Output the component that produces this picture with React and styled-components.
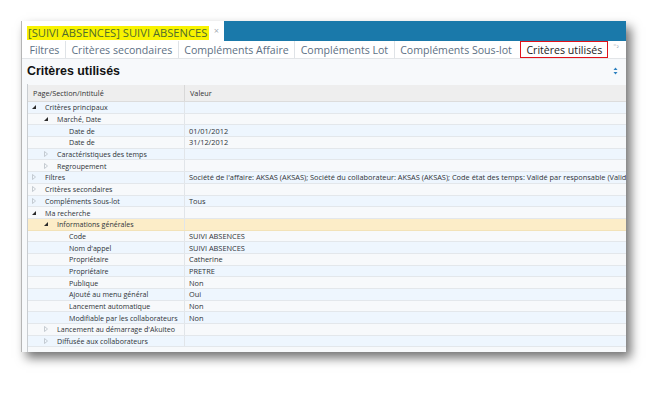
import React from "react";
import styled, { createGlobalStyle } from "styled-components";

const GlobalStyle = createGlobalStyle`
  html, body {
    margin: 0;
    background: #ffffff;
  }
`;

// Page holding the captured window
const Page = styled.div`
  padding: 21px 0 0 21px;
  width: 668px;
  height: 394px;
  box-sizing: border-box;
`;

const Window = styled.div`
  width: 605px;
  height: 331px;
  display: flex;
  flex-direction: column;
  background: #f7f9fb;
  border-left: 1px solid #b5b5b5;
  box-sizing: border-box;
  box-shadow: 5px 6px 10px rgba(0, 0, 0, 0.55);
  overflow: hidden;
`;

// Blue title bar with the document tab
const TitleBar = styled.div`
  height: 20px;
  background: #1a79aa;
  display: flex;
  flex-shrink: 0;
`;

const DocTab = styled.div`
  width: 202px;
  background: #ffffff;
  display: flex;
  align-items: flex-end;
  padding: 0 0 1px 5px;
  gap: 4px;
  box-sizing: border-box;
`;

const DocTitle = styled.span`
  background: #f8f300;
  color: #4f6c2c;
  font-family: "Open Sans", sans-serif;
  font-size: 11.2px;
  line-height: 14px;
  padding: 0 2px 0 1px;
  white-space: nowrap;
`;

const Close = styled.span`
  color: #9aa4ac;
  font-family: "DejaVu Sans", sans-serif;
  font-size: 7px;
  line-height: 14px;
  align-self: flex-start;
  margin-top: 3px;
`;

// Section tabs
const TabStrip = styled.div`
  height: 17px;
  background: #ffffff;
  display: flex;
  align-items: stretch;
  padding-left: 2px;
  border-bottom: 1px solid #e2e5e8;
  flex-shrink: 0;
`;

const Tab = styled.div`
  display: flex;
  align-items: center;
  padding: 0 ${(p) => (p.active ? "6px" : "5.5px")};
  font-family: "Open Sans", sans-serif;
  font-size: 10.6px;
  color: ${(p) => (p.active ? "#222222" : "#5d7084")};
  border-right: ${(p) => (p.last ? "none" : "1px solid #dfe3e7")};
  outline: ${(p) => (p.active ? "1.5px solid #e0131b" : "none")};
  outline-offset: -1.5px;
  margin-left: ${(p) => (p.active ? "3px" : "0")};
  white-space: nowrap;
`;

const Overflow = styled.span`
  margin-left: 5px;
  margin-top: 2px;
  font-family: "DejaVu Sans", sans-serif;
  font-size: 6px;
  color: #8a98a6;
  line-height: 6px;
`;

// Heading area
const Heading = styled.div`
  height: 25px;
  display: flex;
  align-items: center;
  justify-content: space-between;
  padding: 0 8px 2px 5px;
  box-sizing: border-box;
  flex-shrink: 0;
`;

const HeadingTitle = styled.h1`
  margin: 0;
  font-family: "Liberation Sans", Arial, sans-serif;
  font-weight: bold;
  font-size: 12.4px;
  color: #111111;
`;

// Grid
const Grid = styled.div`
  margin-left: 5px;
  border-left: 1px solid #c9cdd1;
  flex: 1;
  display: flex;
  flex-direction: column;
  font-family: "Open Sans", sans-serif;
  font-size: 7.1px;
  color: #2e3338;
`;

const HeaderRow = styled.div`
  height: 17px;
  background: #eeeeee;
  display: grid;
  grid-template-columns: 157px 1fr;
  border-bottom: 1px solid #dcdcdc;
  box-sizing: border-box;
  flex-shrink: 0;
  margin-top: 1px;
`;

const HeaderCell = styled.div`
  display: flex;
  align-items: center;
  padding-left: 5px;
  font-size: 7.3px;
  color: #333333;
  border-right: ${(p) => (p.first ? "1px solid #d8d8d8" : "none")};
`;

const Row = styled.div`
  height: 11.7px;
  display: grid;
  grid-template-columns: 157px 1fr;
  background: ${(p) =>
    p.selected ? "#fcedc8" : p.odd ? "#f7f9fb" : "#eef6fe"};
  border-bottom: 1px solid ${(p) => (p.selected ? "#f2e2b8" : "#e3e7eb")};
  box-sizing: border-box;
  flex-shrink: 0;
`;

const Cell = styled.div`
  display: flex;
  align-items: center;
  white-space: nowrap;
  overflow: hidden;
  padding-left: ${(p) => p.indent}px;
  font-size: ${(p) => (p.first ? "7.1px" : "7.4px")};
  border-right: ${(p) => (p.first ? "1px solid #e1e5e9" : "none")};
`;

const ArrowBox = styled.span`
  width: 12px;
  display: inline-flex;
  justify-content: center;
  align-items: center;
  margin-right: 5px;
`;

const Expander = ({ state }) => (
  <ArrowBox>
    {state === "open" && (
      <svg width="4" height="4" viewBox="0 0 4 4">
        <path d="M4 0 L4 4 L0 4 Z" fill="#2a2a2a" />
      </svg>
    )}
    {state === "closed" && (
      <svg width="4" height="6" viewBox="0 0 4 6">
        <path d="M0.5 0.5 L3.5 3 L0.5 5.5 Z" fill="none" stroke="#b9c0c6" strokeWidth="0.8" />
      </svg>
    )}
  </ArrowBox>
);

const SortIcon = () => (
  <svg width="5" height="8" viewBox="0 0 5 8">
    <path d="M2.5 0.5 L4.5 3 L0.5 3 Z" fill="#2b7fbf" />
    <path d="M2.5 7.5 L4.5 5 L0.5 5 Z" fill="#2b7fbf" />
  </svg>
);

const tabs = [
  "Filtres",
  "Critères secondaires",
  "Compléments Affaire",
  "Compléments Lot",
  "Compléments Sous-lot",
];

const rows = [
  { level: 0, state: "open", label: "Critères principaux" },
  { level: 1, state: "open", label: "Marché, Date" },
  { level: 2, label: "Date de", value: "01/01/2012" },
  { level: 2, label: "Date de", value: "31/12/2012" },
  { level: 1, state: "closed", label: "Caractéristiques des temps" },
  { level: 1, state: "closed", label: "Regroupement" },
  {
    level: 0,
    state: "closed",
    label: "Filtres",
    value:
      "Société de l'affaire: AKSAS (AKSAS); Société du collaborateur: AKSAS (AKSAS); Code état des temps: Validé par responsable (Valid",
  },
  { level: 0, state: "closed", label: "Critères secondaires" },
  { level: 0, state: "closed", label: "Compléments Sous-lot", value: "Tous" },
  { level: 0, state: "open", label: "Ma recherche" },
  { level: 1, state: "open", label: "Informations générales", selected: true },
  { level: 2, label: "Code", value: "SUIVI ABSENCES" },
  { level: 2, label: "Nom d'appel", value: "SUIVI ABSENCES" },
  { level: 2, label: "Propriétaire", value: "Catherine" },
  { level: 2, label: "Propriétaire", value: "PRETRE" },
  { level: 2, label: "Publique", value: "Non" },
  { level: 2, label: "Ajouté au menu général", value: "Oui" },
  { level: 2, label: "Lancement automatique", value: "Non" },
  { level: 2, label: "Modifiable par les collaborateurs", value: "Non" },
  { level: 1, state: "closed", label: "Lancement au démarrage d'Akuiteo" },
  { level: 1, state: "closed", label: "Diffusée aux collaborateurs" },
];

const App = () => (
  <Page>
    <GlobalStyle />
    <Window>
      <TitleBar>
        <DocTab>
          <DocTitle>[SUIVI ABSENCES] SUIVI ABSENCES</DocTitle>
          <Close>×</Close>
        </DocTab>
      </TitleBar>
      <TabStrip>
        {tabs.map((t, i) => (
          <Tab key={t} last={i === tabs.length - 1}>
            {t}
          </Tab>
        ))}
        <Tab active last>
          Critères utilisés
        </Tab>
        <Overflow>⁼₂</Overflow>
      </TabStrip>
      <Heading>
        <HeadingTitle>Critères utilisés</HeadingTitle>
        <SortIcon />
      </Heading>
      <Grid>
        <HeaderRow>
          <HeaderCell first>Page/Section/Intitulé</HeaderCell>
          <HeaderCell>Valeur</HeaderCell>
        </HeaderRow>
        {rows.map((r, i) => (
          <Row key={i} odd={i % 2 === 1} selected={r.selected}>
            <Cell first indent={r.level * 12}>
              <Expander state={r.state} />
              {r.label}
            </Cell>
            <Cell indent={4}>{r.value}</Cell>
          </Row>
        ))}
      </Grid>
    </Window>
  </Page>
);

export default App;
